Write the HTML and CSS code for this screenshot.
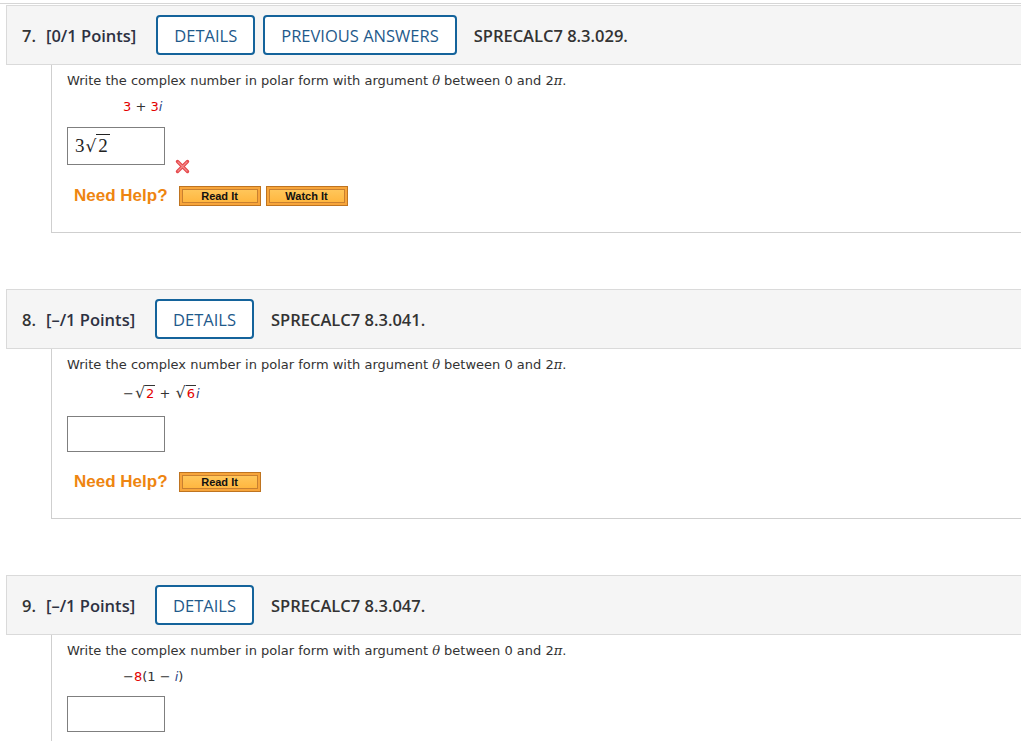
FILE: index.html
```html
<!DOCTYPE html>
<html>
<head>
<meta charset="utf-8">
<link rel="stylesheet" href="styles.css">
</head>
<body>
<div class="topline"></div>

<div class="question">
  <div class="qhead">
    <span class="qnum">7.</span>
    <span class="qpts">[0/1 Points]</span>
    <span class="qbtn">DETAILS</span>
    <span class="qbtn">PREVIOUS ANSWERS</span>
    <span class="qref">SPRECALC7 8.3.029.</span>
  </div>
  <div class="qbody b1">
    <p class="prompt">Write the complex number in polar form with argument <i class="serif-i">θ</i> between 0 and 2<i class="serif-i">π</i>.</p>
    <div class="expr"><span class="red">3</span> + <span class="red">3</span><i class="iv">i</i></div>
    <div class="answer-row">
      <div class="answer filled"><span class="tex">3<span class="rad">√</span><span class="radicand">2</span></span></div>
      <svg class="wrong" width="15" height="15" viewBox="0 0 15 15"><path d="M2.5 2.5 L12.5 12.5 M12.5 2.5 L2.5 12.5" stroke="#e4474a" stroke-width="3.4" stroke-linecap="round"/><path d="M3 3 L12 12 M12 3 L3 12" stroke="#f58a8a" stroke-width="1.2" stroke-linecap="round"/></svg>
    </div>
    <div class="help">
      <span class="need">Need Help?</span>
      <span class="hbtn"><span>Read It</span></span>
      <span class="hbtn"><span>Watch It</span></span>
    </div>
  </div>
</div>

<div class="question">
  <div class="qhead">
    <span class="qnum">8.</span>
    <span class="qpts">[–/1 Points]</span>
    <span class="qbtn">DETAILS</span>
    <span class="qref">SPRECALC7 8.3.041.</span>
  </div>
  <div class="qbody b2">
    <p class="prompt">Write the complex number in polar form with argument <i class="serif-i">θ</i> between 0 and 2<i class="serif-i">π</i>.</p>
    <div class="expr expr2">−<span class="sq">√</span><span class="over red">2</span> + <span class="sq">√</span><span class="over red">6</span><i class="iv">i</i></div>
    <div class="answer-row">
      <div class="answer empty"></div>
    </div>
    <div class="help help2">
      <span class="need">Need Help?</span>
      <span class="hbtn"><span>Read It</span></span>
    </div>
  </div>
</div>

<div class="question last">
  <div class="qhead">
    <span class="qnum">9.</span>
    <span class="qpts">[–/1 Points]</span>
    <span class="qbtn">DETAILS</span>
    <span class="qref">SPRECALC7 8.3.047.</span>
  </div>
  <div class="qbody b3">
    <p class="prompt">Write the complex number in polar form with argument <i class="serif-i">θ</i> between 0 and 2<i class="serif-i">π</i>.</p>
    <div class="expr">−<span class="red">8</span>(1 − <i class="iv">i</i>)</div>
    <div class="answer-row row3">
      <div class="answer empty"></div>
    </div>
  </div>
</div>
</body>
</html>
```

FILE: styles.css
```css
html, body {
  margin: 0;
  padding: 0;
  background: #fff;
  overflow: hidden;
}
body {
  width: 1021px;
  height: 741px;
  padding-top: 3px;
  box-sizing: border-box;
}
.topline {
  height: 1px;
  background: #d6d6d6;
  margin-bottom: 1px;
}
.question {
  margin-left: 6px;
  margin-bottom: 56px;
}
.question.last {
  margin-bottom: 0;
}
.qhead {
  display: flex;
  align-items: center;
  height: 40px;
  padding: 9px 15px;
  background: #f5f5f5;
  border: 1px solid #dadada;
  border-right: none;
  font-family: "Open Sans", sans-serif;
  font-weight: 600;
  font-size: 16.5px;
  color: #333;
}
.qnum {
  margin-right: 10px;
}
.qpts {
  color: #2d3142;
  margin-right: 20px;
}
.qbtn {
  display: flex;
  align-items: center;
  height: 36px;
  padding: 0 16px;
  border: 2px solid #14639b;
  border-radius: 4px;
  background: #fff;
  color: #1f5a8b;
  font-weight: 400;
  margin-right: 8px;
}
.qref {
  margin-left: 9px;
  color: #333;
}
.qbody {
  margin-left: 45px;
  border-left: 1px solid #cfcfcf;
  border-bottom: 1px solid #cfcfcf;
  padding: 6px 0 0 15px;
  box-sizing: border-box;
  font-family: "DejaVu Sans", Verdana, sans-serif;
  font-size: 13px;
  color: #333;
}
.qbody.b1 {
  height: 168px;
}
.qbody.b2 {
  height: 170px;
}
.qbody.b3 {
  border-bottom: none;
  height: 106px;
}
.prompt {
  margin: 0;
  height: 20px;
  line-height: 20px;
}
.serif-i {
  font-family: "DejaVu Serif", serif;
  font-style: italic;
}
.expr {
  margin-left: 56px;
  margin-top: 6px;
  height: 20px;
  line-height: 20px;
  color: #333;
}
.expr2 {
  margin-top: 8px;
}
.red {
  color: #e30000;
}
.iv {
  font-family: "DejaVu Sans", sans-serif;
  font-style: italic;
  color: #2e4a8a;
}
.sq {
  font-size: 16px;
  margin-left: 1px;
}
.over {
  border-top: 1px solid #333;
  padding: 0 1px;
}
.answer-row {
  display: flex;
  align-items: flex-start;
  margin-top: 10px;
}
.answer-row.row3 {
  margin-top: 6px;
}
.answer {
  width: 98px;
  height: 38px;
  border: 1px solid #7f7f7f;
  box-sizing: border-box;
  background: #fff;
}
.answer.empty {
  height: 36px;
  margin-top: 3px;
}
.tex {
  display: inline-block;
  margin: 7px 0 0 7px;
  font-family: "Liberation Serif", "DejaVu Serif", serif;
  font-size: 19px;
  color: #222;
}
.rad {
  font-family: "DejaVu Sans", sans-serif;
  font-size: 17px;
  margin-left: 1px;
}
.radicand {
  border-top: 1px solid #222;
  padding: 0 2px;
}
.wrong {
  margin: 32px 0 0 10px;
}
.help {
  display: flex;
  align-items: center;
  margin-top: 12px;
  margin-left: 7px;
}
.help2 {
  margin-top: 20px;
}
.need {
  font-family: "Liberation Sans", Arial, sans-serif;
  font-weight: 700;
  font-size: 17px;
  color: #ee8510;
  margin-right: 11px;
}
.hbtn {
  display: block;
  width: 82px;
  height: 20px;
  box-sizing: border-box;
  border: 1px solid #bf7420;
  background: #f7a53b;
  padding: 2px;
  margin-right: 5px;
}
.hbtn span {
  display: block;
  height: 14px;
  line-height: 13px;
  box-sizing: border-box;
  border: 1px solid #c98030;
  background: linear-gradient(#ffc65a, #ffb740);
  text-align: center;
  font-family: "Liberation Sans", Arial, sans-serif;
  font-weight: 700;
  font-size: 11px;
  color: #111;
}
```
